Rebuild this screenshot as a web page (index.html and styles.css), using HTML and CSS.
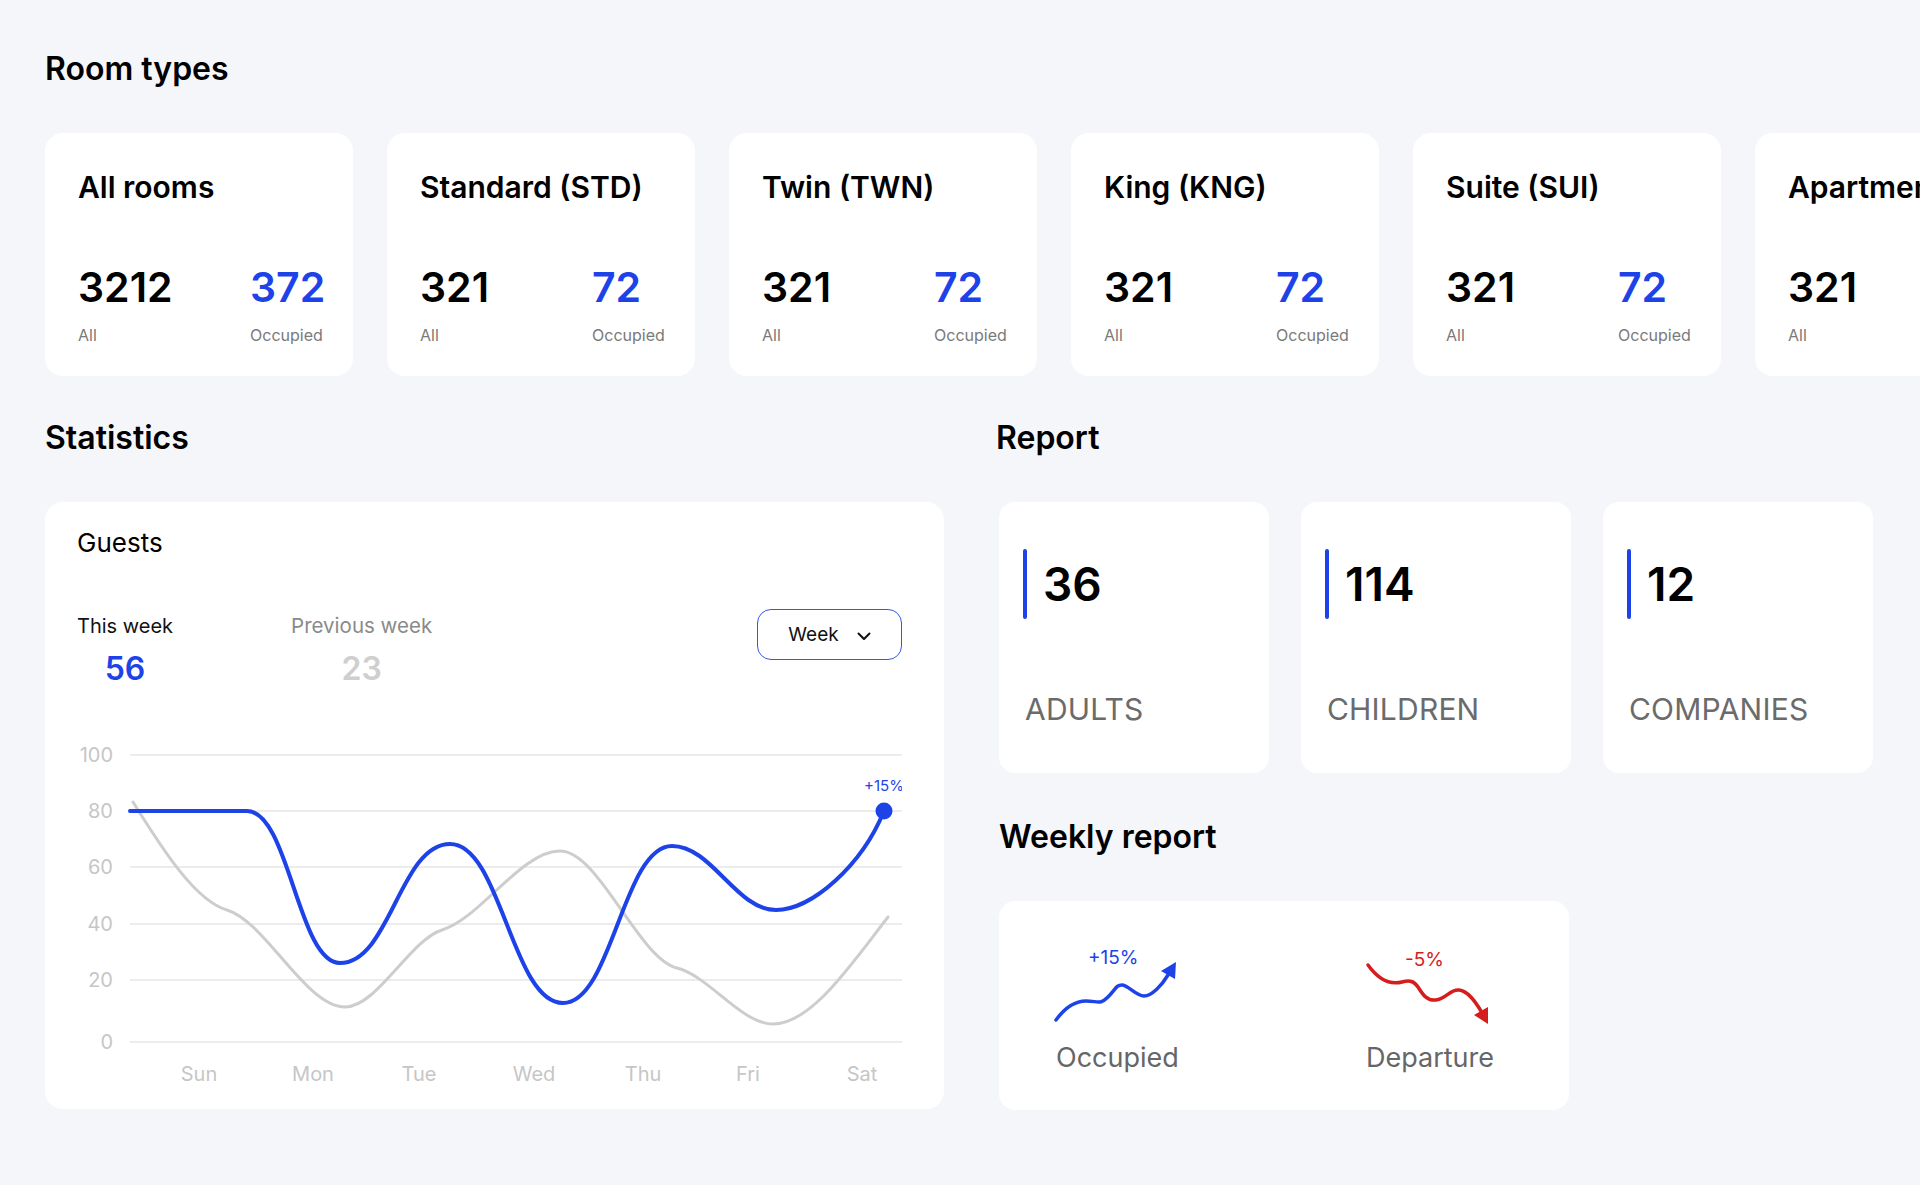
FILE: index.html
```html
<!DOCTYPE html>
<html lang="en">
<head>
<meta charset="utf-8">
<title>Dashboard</title>
<link rel="stylesheet" href="styles.css">
</head>
<body>
<main class="page">
  <section class="rooms">
    <h2 class="section-title">Room types</h2>
    <div class="room-row">
      <div class="room-card">
        <h3>All rooms</h3>
        <div class="room-stats">
          <div><div class="stat-num">3212</div><div class="stat-label">All</div></div>
          <div><div class="stat-num blue">372</div><div class="stat-label">Occupied</div></div>
        </div>
      </div>
      <div class="room-card">
        <h3>Standard (STD)</h3>
        <div class="room-stats">
          <div><div class="stat-num">321</div><div class="stat-label">All</div></div>
          <div><div class="stat-num blue">72</div><div class="stat-label">Occupied</div></div>
        </div>
      </div>
      <div class="room-card">
        <h3>Twin (TWN)</h3>
        <div class="room-stats">
          <div><div class="stat-num">321</div><div class="stat-label">All</div></div>
          <div><div class="stat-num blue">72</div><div class="stat-label">Occupied</div></div>
        </div>
      </div>
      <div class="room-card">
        <h3>King (KNG)</h3>
        <div class="room-stats">
          <div><div class="stat-num">321</div><div class="stat-label">All</div></div>
          <div><div class="stat-num blue">72</div><div class="stat-label">Occupied</div></div>
        </div>
      </div>
      <div class="room-card">
        <h3>Suite (SUI)</h3>
        <div class="room-stats">
          <div><div class="stat-num">321</div><div class="stat-label">All</div></div>
          <div><div class="stat-num blue">72</div><div class="stat-label">Occupied</div></div>
        </div>
      </div>
      <div class="room-card">
        <h3>Apartment (APT)</h3>
        <div class="room-stats">
          <div><div class="stat-num">321</div><div class="stat-label">All</div></div>
          <div><div class="stat-num blue">72</div><div class="stat-label">Occupied</div></div>
        </div>
      </div>
    </div>
  </section>

  <div class="bottom">
    <section class="stats">
      <h2 class="section-title">Statistics</h2>
      <div class="guests-card">
        <div class="guests-title">Guests</div>
        <div class="guests-head">
          <div class="week-stats">
            <div class="week-col">
              <div class="week-label">This week</div>
              <div class="week-num blue">56</div>
            </div>
            <div class="week-col">
              <div class="week-label muted">Previous week</div>
              <div class="week-num light">23</div>
            </div>
          </div>
          <button class="week-btn" type="button">
            <span>Week</span>
            <svg class="chev" width="14" height="9" viewBox="0 0 14 9"><path d="M1.5 1.5 L7 7 L12.5 1.5" fill="none" stroke="#111" stroke-width="2" stroke-linecap="round" stroke-linejoin="round"/></svg>
          </button>
        </div>
        <svg class="chart" width="825" height="350" viewBox="0 0 825 350">
          <g class="grid" stroke="#e6e6e6" stroke-width="1.5">
            <line x1="53" y1="15" x2="825" y2="15"/>
            <line x1="53" y1="71" x2="825" y2="71"/>
            <line x1="53" y1="127" x2="825" y2="127"/>
            <line x1="53" y1="184" x2="825" y2="184"/>
            <line x1="53" y1="240" x2="825" y2="240"/>
            <line x1="53" y1="302" x2="825" y2="302"/>
          </g>
          <g class="axis" fill="#c6c6c6" font-size="20" text-anchor="end">
            <text x="36" y="22">100</text>
            <text x="36" y="78">80</text>
            <text x="36" y="134">60</text>
            <text x="36" y="191">40</text>
            <text x="36" y="247">20</text>
            <text x="36" y="309">0</text>
          </g>
          <g class="axis" fill="#c6c6c6" font-size="20" text-anchor="middle">
            <text x="122" y="341">Sun</text>
            <text x="236" y="341">Mon</text>
            <text x="342" y="341">Tue</text>
            <text x="457" y="341">Wed</text>
            <text x="566" y="341">Thu</text>
            <text x="671" y="341">Fri</text>
            <text x="785" y="341">Sat</text>
          </g>
          <path d="M56,62 C87,112 119,161 150,170 C189,182 229,267 268,267 C300,267 333,200 365,190 C404,178 444,111 483,111 C522,111 561,218 600,228 C632,236 664,284 696,284 C734,284 773,226 811,177" fill="none" stroke="#cdcdcd" stroke-width="3" stroke-linecap="round"/>
          <path d="M53,71 H170 C212,71 221,223 263,223 C313,223 323,104 373,104 C424,104 435,263 486,263 C535,263 546,106 595,106 C635,106 659,170 699,170 C735,170 785,125 807,71" fill="none" stroke="#1d43e8" stroke-width="4" stroke-linecap="round"/>
          <circle cx="807" cy="71" r="8.5" fill="#1d43e8"/>
          <text x="807" y="51" fill="#1d43e8" font-size="15" text-anchor="middle" class="axis">+15%</text>
        </svg>
      </div>
    </section>

    <section class="report">
      <h2 class="section-title report-title">Report</h2>
      <div class="report-cards">
        <div class="report-card">
          <div class="report-top"><span class="bar"></span><span class="report-num">36</span></div>
          <div class="report-label">ADULTS</div>
        </div>
        <div class="report-card">
          <div class="report-top"><span class="bar"></span><span class="report-num">114</span></div>
          <div class="report-label">CHILDREN</div>
        </div>
        <div class="report-card">
          <div class="report-top"><span class="bar"></span><span class="report-num">12</span></div>
          <div class="report-label">COMPANIES</div>
        </div>
      </div>

      <h2 class="section-title weekly-title">Weekly report</h2>
      <div class="weekly-card">
        <div class="weekly-item">
          <svg class="trend" width="140" height="96" viewBox="0 0 140 96">
            <text x="38" y="19" fill="#1d43e8" font-size="19">+15%</text>
            <path d="M6,75 C14,64 24,56 36,56 S50,60 58,52 S66,40 72,40 S86,51 94,51 S112,40 118,30" fill="none" stroke="#1d43e8" stroke-width="3.5" stroke-linecap="round"/>
            <polygon points="126,17 111,26 125,34" fill="#1d43e8"/>
          </svg>
          <div class="weekly-label">Occupied</div>
        </div>
        <div class="weekly-item">
          <svg class="trend" width="140" height="96" viewBox="0 0 140 96">
            <text x="45" y="21" fill="#d61d1d" font-size="19">-5%</text>
            <path d="M8,20 C18,34 30,40 42,37 C50,35 54,36 58,42 C63,50 67,56 76,55 C86,54 90,44 99,45 C108,46 115,56 121,66" fill="none" stroke="#d61d1d" stroke-width="3.5" stroke-linecap="round"/>
            <polygon points="128,79 114,70 128,62" fill="#d61d1d"/>
          </svg>
          <div class="weekly-label">Departure</div>
        </div>
      </div>
    </section>
  </div>
</main>
</body>
</html>
```

FILE: styles.css
```css
* { box-sizing: border-box; }

html, body {
  margin: 0;
  padding: 0;
}

body {
  background: #f5f6fa;
  font-family: Inter, "Noto Sans", "Liberation Sans", sans-serif;
  color: #000;
  overflow: hidden;
  width: 1920px;
  height: 1185px;
}

.page {
  padding: 50px 0 0 45px;
}

.section-title {
  margin: 0;
  font-size: 32px;
  line-height: 38px;
  font-weight: 600;
  color: #000;
  white-space: nowrap;
}

/* Room types */
.room-row {
  display: flex;
  gap: 34px;
  margin-top: 45px;
  overflow: hidden;
}

.room-card {
  flex: 0 0 308px;
  height: 243px;
  background: #fff;
  border-radius: 18px;
  padding: 36px 0 0 33px;
}

.room-card h3 {
  margin: 0;
  font-size: 30px;
  line-height: 36px;
  font-weight: 600;
  white-space: nowrap;
}

.room-stats {
  display: grid;
  grid-template-columns: 172px auto;
  margin-top: 57px;
}

.stat-num {
  font-size: 41px;
  line-height: 50px;
  font-weight: 600;
}

.blue { color: #1d43e8; }

.stat-label {
  margin-top: 13px;
  font-size: 16px;
  line-height: 20px;
  color: #7a7a7a;
}

/* Bottom area */
.bottom {
  display: flex;
  gap: 55px;
  margin-top: 43px;
}

.stats {
  flex: 0 0 899px;
}

.guests-card {
  margin-top: 45px;
  background: #fff;
  border-radius: 18px;
  padding: 25px 42px 19px 32px;
}

.guests-title {
  font-size: 26px;
  line-height: 32px;
  font-weight: 400;
}

.guests-head {
  display: flex;
  justify-content: space-between;
  align-items: flex-start;
  margin-top: 55px;
}

.week-stats {
  display: flex;
  gap: 118px;
}

.week-col {
  display: flex;
  flex-direction: column;
  align-items: center;
}

.week-label {
  font-size: 20px;
  line-height: 24px;
  color: #111;
}

.week-label.muted {
  color: #8a8a8a;
  font-size: 20.5px;
}

.week-num {
  margin-top: 12px;
  font-size: 32px;
  line-height: 37px;
  font-weight: 600;
}

.week-num.light { color: #cfcfcf; }

.week-btn {
  margin-top: -5px;
  width: 145px;
  height: 51px;
  display: flex;
  align-items: center;
  justify-content: center;
  gap: 18px;
  background: #fff;
  border: 1.5px solid #3557e8;
  border-radius: 14px;
  font-family: inherit;
  font-size: 19px;
  color: #111;
  padding: 0;
}

.chev { display: block; margin-top: 3px; }

.chart {
  display: block;
  margin-top: 53px;
}

.axis {
  font-family: Inter, "Noto Sans", "Liberation Sans", sans-serif;
}

/* Report */
.report {
  flex: 0 0 auto;
}

.report-title {
  margin-left: -3px;
}

.report-cards {
  display: flex;
  gap: 32px;
  margin-top: 45px;
}

.report-card {
  width: 270px;
  height: 271px;
  background: #fff;
  border-radius: 16px;
  padding: 47px 0 0 24px;
}

.report-top {
  display: flex;
  align-items: center;
  gap: 16px;
  height: 70px;
}

.bar {
  width: 4px;
  height: 70px;
  border-radius: 2px;
  background: #1d43e8;
}

.report-num {
  font-size: 46px;
  line-height: 56px;
  font-weight: 600;
}

.report-label {
  margin-top: 72px;
  margin-left: 2px;
  font-size: 30px;
  line-height: 36px;
  color: #6b6b6b;
  letter-spacing: 0.2px;
}

.weekly-title {
  margin-top: 45px;
}

.weekly-card {
  margin-top: 45px;
  width: 570px;
  height: 209px;
  background: #fff;
  border-radius: 16px;
  padding: 44px 0 0 51px;
  display: flex;
  gap: 170px;
}

.weekly-item {
  width: 140px;
}

.trend { display: block; }

.weekly-label {
  padding-left: 6px;
  font-size: 27px;
  line-height: 34px;
  color: #666;
  white-space: nowrap;
}
```
